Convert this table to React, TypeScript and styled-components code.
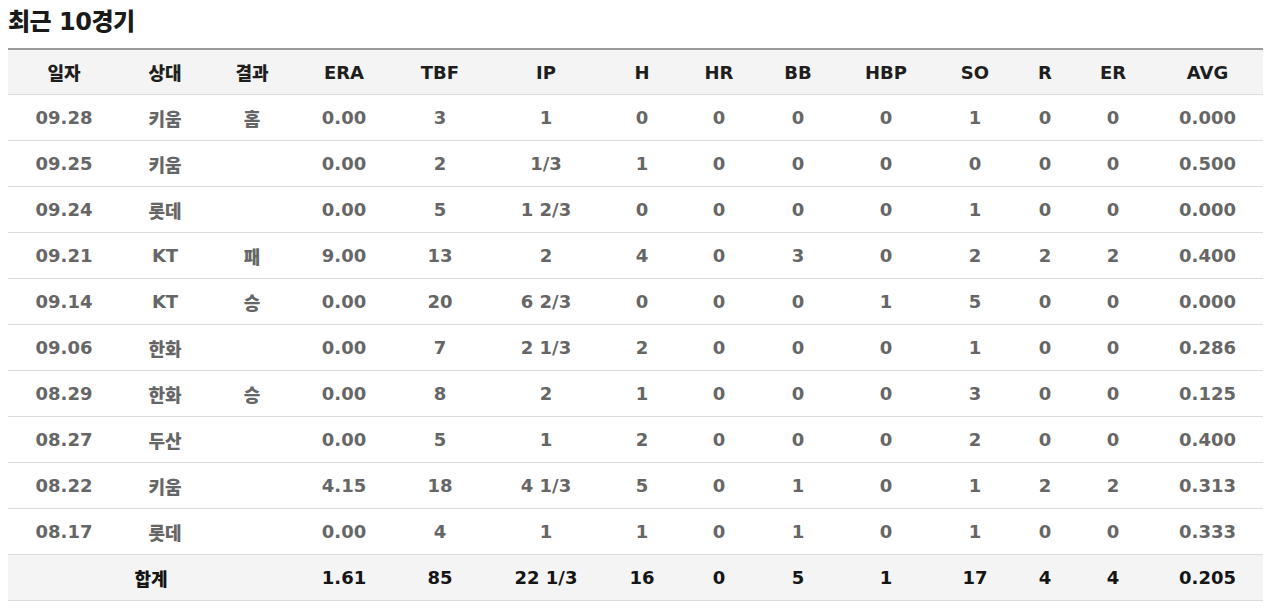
import React from 'react';
import styled, { createGlobalStyle } from 'styled-components';

const GlobalStyle = createGlobalStyle`
  body {
    margin: 8px;
    background: #fff;
    font-family: "DejaVu Sans", "Noto Sans CJK KR", sans-serif;
  }
`;

type Game = {
  date: string;
  opp: string;
  result: string;
  era: string;
  tbf: string;
  ip: string;
  h: string;
  hr: string;
  bb: string;
  hbp: string;
  so: string;
  r: string;
  er: string;
  avg: string;
};

const columns = [
  { label: '일자', width: 112 },
  { label: '상대', width: 90 },
  { label: '결과', width: 84 },
  { label: 'ERA', width: 100 },
  { label: 'TBF', width: 92 },
  { label: 'IP', width: 120 },
  { label: 'H', width: 72 },
  { label: 'HR', width: 82 },
  { label: 'BB', width: 76 },
  { label: 'HBP', width: 100 },
  { label: 'SO', width: 78 },
  { label: 'R', width: 62 },
  { label: 'ER', width: 74 },
  { label: 'AVG', width: 115 },
];

const games: Game[] = [
  { date: '09.28', opp: '키움', result: '홈', era: '0.00', tbf: '3', ip: '1', h: '0', hr: '0', bb: '0', hbp: '0', so: '1', r: '0', er: '0', avg: '0.000' },
  { date: '09.25', opp: '키움', result: '', era: '0.00', tbf: '2', ip: '1/3', h: '1', hr: '0', bb: '0', hbp: '0', so: '0', r: '0', er: '0', avg: '0.500' },
  { date: '09.24', opp: '롯데', result: '', era: '0.00', tbf: '5', ip: '1 2/3', h: '0', hr: '0', bb: '0', hbp: '0', so: '1', r: '0', er: '0', avg: '0.000' },
  { date: '09.21', opp: 'KT', result: '패', era: '9.00', tbf: '13', ip: '2', h: '4', hr: '0', bb: '3', hbp: '0', so: '2', r: '2', er: '2', avg: '0.400' },
  { date: '09.14', opp: 'KT', result: '승', era: '0.00', tbf: '20', ip: '6 2/3', h: '0', hr: '0', bb: '0', hbp: '1', so: '5', r: '0', er: '0', avg: '0.000' },
  { date: '09.06', opp: '한화', result: '', era: '0.00', tbf: '7', ip: '2 1/3', h: '2', hr: '0', bb: '0', hbp: '0', so: '1', r: '0', er: '0', avg: '0.286' },
  { date: '08.29', opp: '한화', result: '승', era: '0.00', tbf: '8', ip: '2', h: '1', hr: '0', bb: '0', hbp: '0', so: '3', r: '0', er: '0', avg: '0.125' },
  { date: '08.27', opp: '두산', result: '', era: '0.00', tbf: '5', ip: '1', h: '2', hr: '0', bb: '0', hbp: '0', so: '2', r: '0', er: '0', avg: '0.400' },
  { date: '08.22', opp: '키움', result: '', era: '4.15', tbf: '18', ip: '4 1/3', h: '5', hr: '0', bb: '1', hbp: '0', so: '1', r: '2', er: '2', avg: '0.313' },
  { date: '08.17', opp: '롯데', result: '', era: '0.00', tbf: '4', ip: '1', h: '1', hr: '0', bb: '1', hbp: '0', so: '1', r: '0', er: '0', avg: '0.333' },
];

const totals = ['1.61', '85', '22 1/3', '16', '0', '5', '1', '17', '4', '4', '0.205'];

const Section = styled.section`
  display: flex;
  flex-direction: column;
`;

const Title = styled.h3`
  margin: 0 0 12px;
  font-size: 24px;
  line-height: 28px;
  font-weight: 900;
  color: #1a1a1a;
  letter-spacing: -0.5px;
`;

const Table = styled.table`
  width: 1257px;
  border-collapse: collapse;
  table-layout: fixed;
  border-top: 2px solid #9a9a9a;
`;

const HeadCell = styled.th`
  height: 44px;
  padding: 0;
  background: #f4f4f4;
  color: #1e1e1e;
  font-size: 18px;
  font-weight: 900;
  text-align: center;
  border-bottom: 1px solid #dcdcdc;
`;

const Row = styled.tr<{ $total?: boolean }>`
  background: ${({ $total }) => ($total ? '#f4f4f4' : '#fff')};
`;

const Cell = styled.td<{ $total?: boolean }>`
  height: 45px;
  padding: 0;
  text-align: center;
  font-size: 18px;
  font-weight: 900;
  color: ${({ $total }) => ($total ? '#151515' : '#666')};
  border-bottom: 1px solid #dcdcdc;
`;

export default function App() {
  return (
    <>
      <GlobalStyle />
      <Section>
        <Title>최근 10경기</Title>
        <Table>
          <colgroup>
            {columns.map((c) => (
              <col key={c.label} style={{ width: c.width }} />
            ))}
          </colgroup>
          <thead>
            <tr>
              {columns.map((c) => (
                <HeadCell key={c.label}>{c.label}</HeadCell>
              ))}
            </tr>
          </thead>
          <tbody>
            {games.map((g) => (
              <Row key={g.date}>
                <Cell>{g.date}</Cell>
                <Cell>{g.opp}</Cell>
                <Cell>{g.result}</Cell>
                <Cell>{g.era}</Cell>
                <Cell>{g.tbf}</Cell>
                <Cell>{g.ip}</Cell>
                <Cell>{g.h}</Cell>
                <Cell>{g.hr}</Cell>
                <Cell>{g.bb}</Cell>
                <Cell>{g.hbp}</Cell>
                <Cell>{g.so}</Cell>
                <Cell>{g.r}</Cell>
                <Cell>{g.er}</Cell>
                <Cell>{g.avg}</Cell>
              </Row>
            ))}
            <Row $total>
              <Cell $total colSpan={3}>
                합계
              </Cell>
              {totals.map((t, i) => (
                <Cell $total key={i}>
                  {t}
                </Cell>
              ))}
            </Row>
          </tbody>
        </Table>
      </Section>
    </>
  );
}
